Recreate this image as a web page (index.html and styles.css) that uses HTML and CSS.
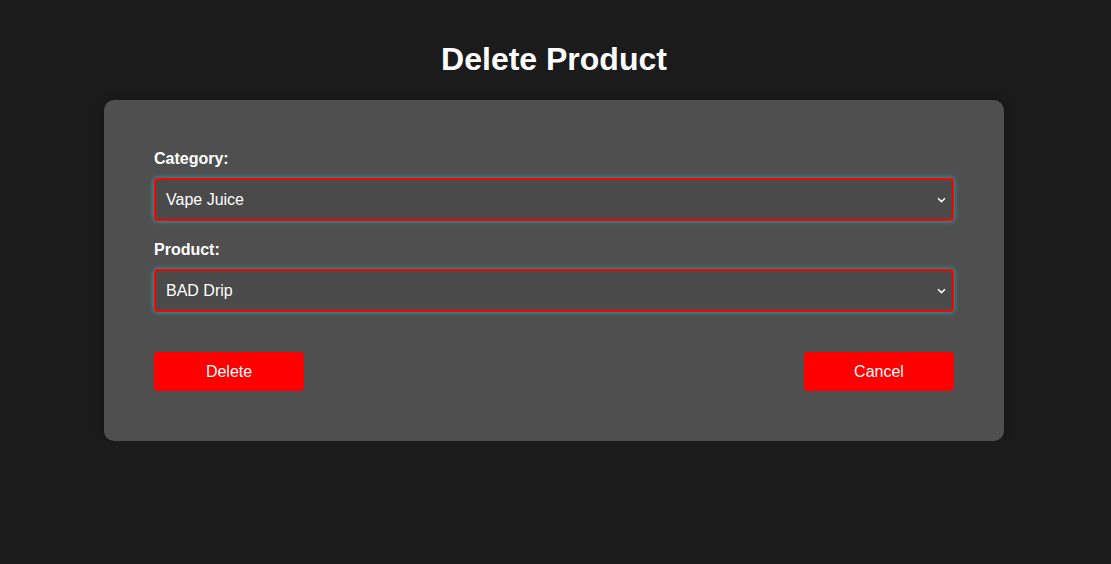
FILE: index.html
```html
<!DOCTYPE html>
<html lang="en">
<head>
<meta charset="utf-8">
<title>Delete Product</title>
<link rel="stylesheet" href="styles.css">
</head>
<body>
<main class="page">
  <h1 class="title">Delete Product</h1>
  <form class="card">
    <label class="label" for="category">Category:</label>
    <div class="select-wrap">
      <select class="field" id="category">
        <option>Vape Juice</option>
      </select>
      <svg class="chevron" width="9" height="6" viewBox="0 0 9 6" aria-hidden="true"><path d="M1 1.2 L4.5 4.6 L8 1.2" fill="none" stroke="#fff" stroke-width="1.5"/></svg>
    </div>
    <label class="label label-second" for="product">Product:</label>
    <div class="select-wrap">
      <select class="field" id="product">
        <option>BAD Drip</option>
      </select>
      <svg class="chevron" width="9" height="6" viewBox="0 0 9 6" aria-hidden="true"><path d="M1 1.2 L4.5 4.6 L8 1.2" fill="none" stroke="#fff" stroke-width="1.5"/></svg>
    </div>
    <div class="actions">
      <button type="button" class="btn">Delete</button>
      <button type="button" class="btn">Cancel</button>
    </div>
  </form>
</main>
</body>
</html>
```

FILE: styles.css
```css
html, body {
  margin: 0;
  padding: 0;
  background: #1b1b1b;
  font-family: "Liberation Sans", Arial, sans-serif;
  color: #fff;
}
.page {
  display: flex;
  flex-direction: column;
  align-items: center;
  padding: 41px 3px 0 0;
}
.title {
  margin: 0 0 22px;
  font-size: 32px;
  font-weight: bold;
  line-height: 37px;
}
.card {
  width: 900px;
  box-sizing: border-box;
  padding: 50px;
  background: #4f4f4f;
  border-radius: 10px;
  box-shadow: 0 0 10px rgba(0, 0, 0, 0.35);
  display: flex;
  flex-direction: column;
}
.label {
  font-size: 16px;
  font-weight: bold;
  line-height: 18px;
  margin-bottom: 10px;
}
.label-second {
  margin-top: 20px;
}
.select-wrap {
  position: relative;
  display: flex;
}
.field {
  flex: 1;
  height: 43px;
  box-sizing: border-box;
  padding: 0 24px 1px 10px;
  background: #4a4a4a;
  color: #fff;
  border: 2px solid #ff0000;
  border-radius: 4px;
  box-shadow: 0 0 5px rgba(30, 190, 200, 0.95);
  font-family: "Liberation Sans", Arial, sans-serif;
  font-size: 16px;
  outline: none;
  -webkit-appearance: none;
  appearance: none;
}
.chevron {
  position: absolute;
  right: 8px;
  top: 19px;
  pointer-events: none;
}
.actions {
  display: flex;
  justify-content: space-between;
  margin-top: 40px;
}
.btn {
  width: 150px;
  height: 39px;
  border: none;
  border-radius: 4px;
  background: #ff0000;
  color: #fff;
  font-family: "Liberation Sans", Arial, sans-serif;
  font-size: 16px;
  cursor: pointer;
}
```
